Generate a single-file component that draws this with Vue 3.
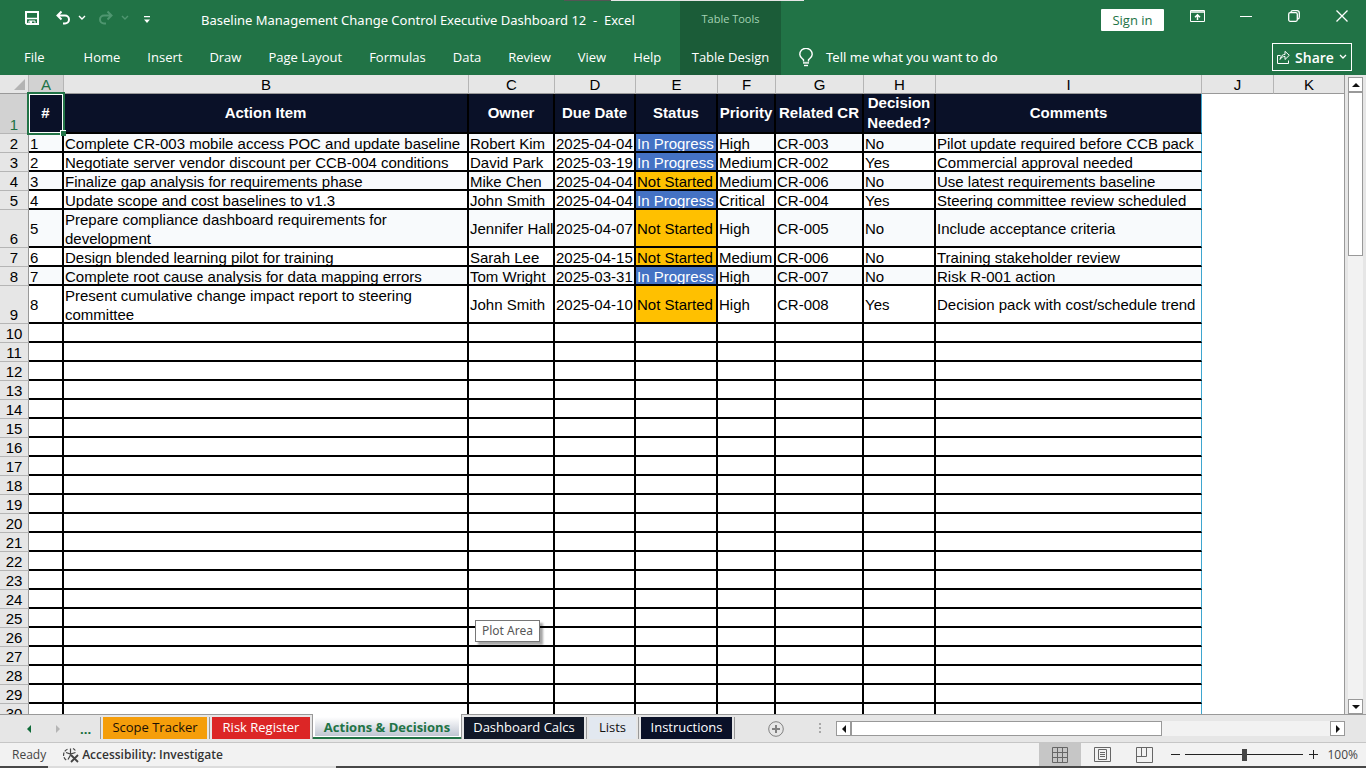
<script setup>
import { ref } from 'vue'

const zoom = ref(50)
const menu = ['Home', 'Insert', 'Draw', 'Page Layout', 'Formulas', 'Data', 'Review', 'View', 'Help']
const columns = ['A', 'B', 'C', 'D', 'E', 'F', 'G', 'H', 'I', 'J', 'K']
const titles = ['#', 'Action Item', 'Owner', 'Due Date', 'Status', 'Priority', 'Related CR', 'Decision Needed?', 'Comments']
const items = [
  ['1', 'Complete CR-003 mobile access POC and update baseline', 'Robert Kim', '2025-04-04', 'In Progress', 'High', 'CR-003', 'No', 'Pilot update required before CCB pack'],
  ['2', 'Negotiate server vendor discount per CCB-004 conditions', 'David Park', '2025-03-19', 'In Progress', 'Medium', 'CR-002', 'Yes', 'Commercial approval needed'],
  ['3', 'Finalize gap analysis for requirements phase', 'Mike Chen', '2025-04-04', 'Not Started', 'Medium', 'CR-006', 'No', 'Use latest requirements baseline'],
  ['4', 'Update scope and cost baselines to v1.3', 'John Smith', '2025-04-04', 'In Progress', 'Critical', 'CR-004', 'Yes', 'Steering committee review scheduled'],
  ['5', 'Prepare compliance dashboard requirements for development', 'Jennifer Hall', '2025-04-07', 'Not Started', 'High', 'CR-005', 'No', 'Include acceptance criteria'],
  ['6', 'Design blended learning pilot for training', 'Sarah Lee', '2025-04-15', 'Not Started', 'Medium', 'CR-006', 'No', 'Training stakeholder review'],
  ['7', 'Complete root cause analysis for data mapping errors', 'Tom Wright', '2025-03-31', 'In Progress', 'High', 'CR-007', 'No', 'Risk R-001 action'],
  ['8', 'Present cumulative change impact report to steering committee', 'John Smith', '2025-04-10', 'Not Started', 'High', 'CR-008', 'Yes', 'Decision pack with cost/schedule trend']
]
const tallRows = ['5', '8']
// Empty rows fill the window below the last item, above the sheet and status bars.
const emptyCount = Math.max(1, Math.ceil((window.innerHeight - 54 - 324) / 19))
const emptyRows = Array.from({ length: emptyCount }, (_, i) => i + 10)
const sheets = [
  { name: 'Scope Tracker', tone: 'amber' },
  { name: 'Risk Register', tone: 'red' },
  { name: 'Actions & Decisions', tone: 'active' },
  { name: 'Dashboard Calcs', tone: 'ink' },
  { name: 'Lists', tone: 'pale' },
  { name: 'Instructions', tone: 'navy' }
]
const statusTone = (value, index) => (index !== 4 ? '' : value === 'In Progress' ? 'progress' : 'pending')
</script>

<template>
  <div class="app">
    <header class="ribbon">
      <div class="left">
        <div class="titlebar">
          <div class="quick">
            <button aria-label="Save">
              <svg width="16" height="16" viewBox="0 0 16 16" fill="none" stroke="#fff" stroke-width="2"><path d="M2 2h12v12H3l-1-1z" /><path d="M2 8.500h12" stroke-width="1.500" /><path d="M5 14v-3h6v3" stroke-width="1" /><path d="M6 11h2v3H6z" fill="#fff" stroke="none" /></svg>
            </button>
            <button class="undo" aria-label="Undo">
              <svg width="16" height="16" viewBox="0 0 16 16" fill="none" stroke="#fff" stroke-width="2"><path d="M6.500 1.500 2.500 5.500l4 4M3 5.500h7a4 4 0 0 1 0 8H8" /></svg>
            </button>
            <button aria-label="Undo list">
              <svg width="8" height="6" viewBox="0 0 8 6" fill="none" stroke="#fff" stroke-width="1.400"><path d="M1 1l3 3 3-3" /></svg>
            </button>
            <button class="redo" aria-label="Redo">
              <svg width="16" height="16" viewBox="0 0 16 16" fill="none" stroke="#4f9670" stroke-width="2"><path d="M9.500 1.500l4 4-4 4M13 5.500H6a4 4 0 0 0 0 8h2" /></svg>
            </button>
            <button aria-label="Redo list">
              <svg width="8" height="6" viewBox="0 0 8 6" fill="none" stroke="#4f9670" stroke-width="1.400"><path d="M1 1l3 3 3-3" /></svg>
            </button>
            <button class="custom" aria-label="Customize toolbar">
              <svg width="6" height="8" viewBox="0 0 6 8" fill="#fff"><path d="M0 0h6v1.300H0zM0 3.500h6L3 7z" /></svg>
            </button>
          </div>
          <h1>Baseline Management Change Control Executive Dashboard 12&nbsp; -&nbsp; Excel</h1>
        </div>
        <nav class="menu">
          <button class="file">File</button>
          <button v-for="entry in menu" :key="entry">{{ entry }}</button>
        </nav>
      </div>
      <div class="context">
        <span>Table Tools</span>
        <button>Table Design</button>
      </div>
      <div class="right">
        <div class="window">
          <button class="signin">Sign in</button>
          <button class="display" aria-label="Ribbon display options">
            <svg width="15" height="12" viewBox="0 0 15 12" fill="none" stroke="#fff"><path d="M.5.5h14v11H.5z" /><path d="M.5 1.500h14M.5 2.500h14" opacity=".75" /><path d="M7.500 10V5M5 7.200 7.500 4.700 10 7.200" stroke-width="1.500" /></svg>
          </button>
          <button class="min" aria-label="Minimize">
            <svg width="12" height="12" viewBox="0 0 12 12" stroke="#fff"><path d="M0 6.500h12" /></svg>
          </button>
          <button class="restore" aria-label="Restore">
            <svg width="12" height="12" viewBox="0 0 12 12" fill="none" stroke="#fff" stroke-width="1.300"><rect x=".7" y="2.700" width="8.600" height="8.600" rx="1.500" /><path d="M3 2.200Q3 .7 5 .7h4a2.300 2.300 0 0 1 2.300 2.300v4q0 2-1.600 2.200" /></svg>
          </button>
          <button class="close" aria-label="Close">
            <svg width="12" height="12" viewBox="0 0 12 12" stroke="#fff" stroke-width="1.300"><path d="M.5.5l11 11M11.500.5l-11 11" /></svg>
          </button>
        </div>
        <div class="commands">
          <button class="tell">
            <svg width="14" height="19" viewBox="0 0 14 19" fill="none" stroke="#fff" stroke-width="1.400"><path d="M4.500 13.500v-1.800C3 10 .8 9 .8 6.500a6.200 6.200 0 0 1 12.400 0c0 2.500-2.200 3.500-3.700 5.200v1.800" /><path d="M4 13.800h6v2H4z" fill="#fff" stroke="none" opacity=".8" /><path d="M5 17.500h4" /></svg>
            <span>Tell me what you want to do</span>
          </button>
          <button class="share">
            <svg width="13" height="14" viewBox="0 0 13 14" fill="none" stroke="#fff"><path d="M3.500 5.500h-3v8h11v-3" /><path d="M3 9.500c.5-3.500 2.500-5 5-5V1.300l4.300 4L8 9.500v-3c-2.300 0-3.700.7-5 3z" /></svg>
            Share
            <svg width="8" height="6" viewBox="0 0 8 6" fill="none" stroke="#fff" stroke-width="1.300"><path d="M1 1l3 3 3-3" /></svg>
          </button>
        </div>
      </div>
      <i class="edge"></i>
    </header>

    <main class="work">
      <div class="grid">
        <table>
          <colgroup>
            <col class="c-row" />
            <col v-for="c in columns" :key="c" :class="'c-' + c" />
          </colgroup>
          <thead>
            <tr>
              <th class="corner"><svg width="11" height="11" viewBox="0 0 11 11"><path d="M11 0v11H0z" fill="#b4b4b4" /></svg></th>
              <th v-for="c in columns" :key="c" class="letter" :class="{ on: c === 'A' }">{{ c }}</th>
            </tr>
          </thead>
          <tbody>
            <tr class="head">
              <th class="num on">1</th>
              <th v-for="(t, i) in titles" :key="t" class="title" :class="{ last: i === 8 }">
                <div>{{ t }}</div>
                <template v-if="i === 0"><i class="frame"></i><i class="handle"></i></template>
              </th>
              <td class="free"></td>
              <td class="free"></td>
            </tr>
            <tr v-for="(row, r) in items" :key="row[0]" :class="{ tall: tallRows.includes(row[0]), band: r % 2 === 0 }">
              <th class="num">{{ r + 2 }}</th>
              <td v-for="(v, i) in row" :key="i" class="cell" :class="[statusTone(v, i), { last: i === 8 }]"><div>{{ v }}</div></td>
              <td class="free"></td>
              <td class="free"></td>
            </tr>
            <tr v-for="n in emptyRows" :key="n">
              <th class="num">{{ n }}</th>
              <td v-for="i in 9" :key="i" class="cell" :class="{ last: i === 9 }"></td>
              <td class="free"></td>
              <td class="free"></td>
            </tr>
          </tbody>
        </table>
        <div class="tip" role="tooltip">Plot Area</div>
      </div>
      <div class="vscroll">
        <button aria-label="Scroll up"><svg width="8" height="4" viewBox="0 0 8 4"><path d="M4 0l4 4H0z" fill="#111" /></svg></button>
        <div class="vtrack"><div class="vthumb"></div></div>
        <button aria-label="Scroll down"><svg width="8" height="4" viewBox="0 0 8 4"><path d="M4 4l4-4H0z" fill="#111" /></svg></button>
      </div>
    </main>

    <div class="sheetbar">
      <div class="nav">
        <button aria-label="Previous sheet"><svg width="4" height="8" viewBox="0 0 4 8"><path d="M4 0v8L0 4z" fill="#0e6b38" /></svg></button>
        <button aria-label="Next sheet"><svg width="4" height="8" viewBox="0 0 4 8"><path d="M0 0v8l4-4z" fill="#b5b5b5" /></svg></button>
        <button class="more">...</button>
      </div>
      <div class="tabs">
        <div v-for="s in sheets" :key="s.name" class="slot" :class="'slot-' + s.tone">
          <button :class="s.tone">{{ s.name }}</button>
        </div>
      </div>
      <button class="add" aria-label="New sheet">
        <svg width="16" height="16" viewBox="0 0 16 16" fill="none" stroke="#808080"><circle cx="8" cy="8" r="7.300" /><path d="M4 8h8M8 4v8" stroke-width="2" /></svg>
      </button>
      <svg class="grip" width="2" height="11" viewBox="0 0 2 11" fill="#a8a8a8"><path d="M0 0h2v2H0zM0 4h2v2H0zM0 8h2v2H0z" /></svg>
      <div class="hscroll">
        <button aria-label="Scroll left"><svg width="4" height="8" viewBox="0 0 4 8"><path d="M4 0v8L0 4z" fill="#111" /></svg></button>
        <div class="htrack"><div class="hthumb"></div></div>
        <button aria-label="Scroll right"><svg width="4" height="8" viewBox="0 0 4 8"><path d="M0 0v8l4-4z" fill="#111" /></svg></button>
      </div>
    </div>

    <footer class="status">
      <span class="ready">Ready</span>
      <button class="access">
        <svg width="17" height="16" viewBox="0 0 17 16" fill="none" stroke="#444" stroke-width="1.200"><path d="M5.500 2.200A6.200 6.200 0 0 0 5 13.500" stroke-dasharray="3.500 1.300" /><path d="M4 5.500 8.500 7 13.500 5.500M8.500 1.500V8l-2.500 4.500" /><path d="M9 8l7 7M16 8l-7 7" stroke-width="1.800" /><path d="M11 1.500q1.500.8 2.300 2" /></svg>
        Accessibility: Investigate
      </button>
      <div class="views">
        <button class="on" aria-label="Normal view"><svg width="16" height="16" viewBox="0 0 16 16" fill="none" stroke="#666"><path d="M.5.5h15v15H.5zM.5 5.500h15M.5 10.500h15M5.500.5v15M10.500.5v15" /></svg></button>
        <button aria-label="Page layout view"><svg width="17" height="15" viewBox="0 0 17 15" fill="none" stroke="#666"><path d="M.5.5h16v14H.5zM4.500 2.500h8v10h-8zM6 5.500h5M6 7.500h5M6 9.500h5" /></svg></button>
        <button aria-label="Page break view"><svg width="17" height="16" viewBox="0 0 17 16" fill="none" stroke="#666"><path d="M.5.5h16v15H.5zM.5 9.500h10v-9M5.500.5v9" /></svg></button>
      </div>
      <button class="step" aria-label="Zoom out"><svg width="9" height="9" viewBox="0 0 9 9" stroke="#222"><path d="M0 4.500h9" /></svg></button>
      <input v-model="zoom" type="range" min="0" max="100" aria-label="Zoom" />
      <button class="step" aria-label="Zoom in"><svg width="9" height="9" viewBox="0 0 9 9" stroke="#222"><path d="M0 4.500h9M4.500 0v9" /></svg></button>
      <span class="percent">100%</span>
    </footer>
    <div class="desk"><i></i></div>
  </div>
</template>

<style>
body {
  margin: 0;
  overflow: hidden;
}
</style>

<style scoped>
* {
  box-sizing: border-box;
}
button {
  margin: 0;
  padding: 0;
  border: 0;
  background: none;
  color: inherit;
  font: inherit;
  white-space: nowrap;
}
svg {
  display: block;
  flex: none;
}
.app {
  display: flex;
  flex-direction: column;
  height: 100vh;
  overflow: hidden;
  background: #e6e6e6;
  color: #222;
  font-family: "Open Sans", "Noto Sans", sans-serif;
  font-size: 13px;
}

/* Ribbon */
.ribbon {
  position: relative;
  display: flex;
  flex: none;
  height: 75px;
  background: #217346;
  color: #fff;
}
.edge {
  position: absolute;
  top: 0;
  left: 564px;
  width: 240px;
  height: 1px;
  background: linear-gradient(90deg, #555 47px, #e6e6e6 47px);
}
.left {
  width: 680px;
}
.titlebar {
  display: flex;
  height: 40px;
  align-items: center;
}
.quick {
  display: flex;
  align-items: center;
  align-self: flex-start;
  width: 201px;
  height: 35px;
  padding-left: 24px;
}
.undo {
  margin: 0 7px 0 15px;
}
.redo {
  margin: 0 7px 0 12px;
}
.custom {
  margin: 4px 0 0 15px;
}
h1,
.tell span {
  margin: 0;
  font-family: "Noto Sans", "Open Sans", sans-serif;
  font-size: 13px;
  font-weight: 400;
  line-height: 20px;
  white-space: nowrap;
}
.menu {
  display: flex;
  gap: 27px;
  height: 33px;
  padding-left: 24px;
}
.file {
  margin-right: 12px;
}
.context {
  display: flex;
  flex-direction: column;
  align-items: center;
  width: 101px;
  background: #1b5c38;
}
.context span {
  height: 40px;
  color: #a3d3b4;
  font-size: 11px;
  line-height: 38px;
}
.context button {
  height: 33px;
}
.right {
  display: flex;
  flex: 1;
  flex-direction: column;
}
.window {
  display: flex;
  height: 40px;
  justify-content: flex-end;
  padding: 9px 18px 0 0;
}
.signin {
  width: 63px;
  height: 22px;
  margin-right: 26px;
  border-radius: 1px;
  background: #fff;
  color: #217346;
}
.display,
.min,
.restore,
.close {
  height: 14px;
}
.min {
  margin-left: 35px;
}
.restore,
.close {
  margin-left: 36px;
}
.commands {
  display: flex;
  align-items: center;
  justify-content: space-between;
  padding: 3px 14px 0 18px;
}
.tell,
.share {
  display: flex;
  align-items: center;
}
.tell {
  gap: 13px;
}
.share {
  justify-content: space-between;
  width: 80px;
  height: 28px;
  padding: 0 4px;
  border: 1px solid #fff;
  font-size: 14px;
  font-weight: 600;
}

/* Worksheet */
.work {
  display: flex;
  flex: 1;
  min-height: 0;
}
.grid {
  position: relative;
  flex: 1;
  min-width: 0;
  overflow: hidden;
  border-right: 1px solid #999;
  background: #fff;
  font-family: "Liberation Sans", Arial, sans-serif;
  font-size: 15px;
  line-height: 19px;
  color: #000;
}
table {
  width: 100%;
  border-collapse: separate;
  border-spacing: 0;
  table-layout: fixed;
}
th,
td {
  padding: 0;
}
.c-row { width: 29px; }
.c-A { width: 35px; }
.c-B { width: 405px; }
.c-C { width: 86px; }
.c-D { width: 81px; }
.c-E { width: 82px; }
.c-F { width: 58px; }
.c-G { width: 88px; }
.c-H { width: 72px; }
.c-I { width: 266px; }
.c-J { width: 72px; }
tr {
  height: 19px;
}
.corner,
.letter {
  height: 19px;
  border-right: 1px solid #b5b5b5;
  border-bottom: 1px solid #999;
  background: #e6e6e6;
  font-weight: 400;
}
.letter {
  padding-top: 2px;
  line-height: 16px;
}
.letter:last-child {
  border-right: 0;
}
.corner {
  padding: 4px 0 3px 14px;
}
.letter.on {
  background: #d2d2d2;
  color: #217346;
}
.num {
  border-right: 1px solid #999;
  border-bottom: 1px solid #b5b5b5;
  background: #e6e6e6;
  font-weight: 400;
  line-height: 16px;
  vertical-align: bottom;
}
.num.on {
  background: #d2d2d2;
  color: #217346;
}
.head {
  height: 40px;
}
.title {
  position: relative;
  border-right: 2px solid #000;
  border-bottom: 2px solid #000;
  background: #0a1128;
  color: #fff;
  font-weight: 700;
  line-height: 20px;
}
.title div {
  display: flex;
  align-items: center;
  justify-content: center;
  height: 38px;
}
.cell {
  border-right: 2px solid #000;
  border-bottom: 2px solid #000;
}
.title.last,
.cell.last {
  border-right: 1px solid #3ea6cf;
}
.cell div {
  display: flex;
  align-items: safe center;
  height: 17px;
  padding-left: 1px;
  overflow-x: visible;
  overflow-y: clip;
  line-height: 19px;
}
.tall {
  height: 38px;
}
.tall .cell div {
  height: 36px;
}
.band .cell {
  background: #f8fafc;
}
.cell {
  white-space: nowrap;
}
.cell:nth-child(3) {
  white-space: normal;
}
.cell.progress {
  background: #4472c4;
  color: #fff;
}
.cell.pending {
  background: #ffc000;
}
.frame {
  position: absolute;
  inset: -2px -3px -3px -2px;
  border: 2px solid #217346;
  box-shadow: inset 0 0 0 1px #fff;
  z-index: 1;
}
.handle {
  position: absolute;
  right: -4px;
  bottom: -4px;
  z-index: 2;
  width: 6px;
  height: 6px;
  border-top: 1px solid #fff;
  border-left: 1px solid #fff;
  background: #217346;
}
.tip {
  position: absolute;
  top: 545px;
  left: 475px;
  padding: 0 6px;
  border: 1px solid #767676;
  background: #fff;
  box-shadow: 3px 3px 2px rgba(0, 0, 0, 0.35);
  color: #575757;
  font-family: "Noto Sans", "Open Sans", sans-serif;
  font-size: 12px;
  line-height: 20px;
}
.vscroll {
  display: flex;
  flex: none;
  flex-direction: column;
  width: 21px;
  padding: 2px 3px 0 3px;
  background: #e6e6e6;
}
.vscroll button,
.hscroll button {
  display: flex;
  flex: none;
  align-items: center;
  justify-content: center;
  width: 15px;
  height: 15px;
  border: 1px solid #999;
  background: #fff;
}
.vtrack {
  flex: 1;
  background: #f2f2f2;
}
.vthumb {
  height: 27%;
  border: 1px solid #999;
  background: #fff;
}

/* Sheet tabs */
.sheetbar {
  display: flex;
  flex: none;
  align-items: center;
  height: 29px;
  border-top: 1px solid #999;
  border-bottom: 1px solid #c6c6c6;
}
.nav {
  display: flex;
  align-items: center;
  width: 100px;
  padding-left: 27px;
}
.nav button + button {
  margin-left: 25px;
}
.nav button.more {
  margin-left: 20px;
  color: #0e6b38;
  font-weight: 700;
}
.tabs {
  display: flex;
  align-self: flex-start;
  margin-top: -1px;
}
.slot {
  height: 22px;
  margin-top: 3px;
  padding: 0 2px;
  border-right: 1px solid #999;
}
.slot button {
  width: 100%;
  height: 22px;
  padding-bottom: 2px;
}
.slot-amber {
  width: 110px;
  border-left: 1px solid #999;
}
.slot-red {
  width: 102px;
  border-right: 0;
}
.slot-ink {
  width: 125px;
}
.slot-pale {
  width: 52px;
}
.slot-navy {
  width: 96px;
}
.slot .amber {
  background: #f59e0b;
  color: #1a1005;
}
.slot .red {
  background: #dc2626;
  color: #fff;
}
.slot .ink {
  background: #111827;
  color: #fff;
}
.slot .pale {
  background: #e2e8f0;
  color: #111;
}
.slot .navy {
  background: #0a1128;
  color: #fff;
}
.slot-active {
  width: 150px;
  height: 25px;
  margin-top: 0;
  padding-top: 3px;
  border-left: 1px solid #999;
  background: linear-gradient(#217346, #217346) bottom / 100% 2px no-repeat, #fff;
}
.slot .active {
  height: 19px;
  padding: 0;
  background: linear-gradient(#fff, #c0c6d2);
  color: #217346;
  font-weight: 700;
}
.add {
  margin-left: 33px;
}
.grip {
  margin-left: 35px;
}
.hscroll {
  display: flex;
  flex: 1;
  margin: 0 21px 0 15px;
}
.htrack {
  flex: 1;
  background: #f2f2f2;
}
.hthumb {
  width: 65%;
  height: 15px;
  border: 1px solid #999;
  background: #fff;
}

/* Status bar */
.status {
  display: flex;
  flex: none;
  align-items: center;
  height: 23px;
  padding: 0 8px 0 12px;
  background: #f2f2f2;
  color: #444;
  font-size: 12px;
}
.access {
  display: flex;
  align-items: center;
  gap: 3px;
  margin-left: 16px;
  color: #333;
  font-weight: 600;
}
.views {
  display: flex;
  align-self: stretch;
  margin-left: auto;
}
.views button {
  display: flex;
  align-items: center;
  justify-content: center;
  width: 42px;
}
.views .on {
  background: #c6c6c6;
}
.step {
  margin-left: 6px;
}
.percent {
  margin-left: 9px;
}
input[type="range"] {
  width: 118px;
  height: 14px;
  margin: 0 0 0 5px;
  appearance: none;
  background: linear-gradient(#222, #222) center / 100% 1px no-repeat;
}
input[type="range"]::-webkit-slider-thumb {
  width: 5px;
  height: 12px;
  appearance: none;
  background: #444;
}
.desk {
  flex: none;
  height: 2px;
  background: #484848;
}
.desk i {
  display: block;
  width: 288px;
  height: 2px;
  margin-left: 48px;
  background: #dcdcdc;
}
</style>
